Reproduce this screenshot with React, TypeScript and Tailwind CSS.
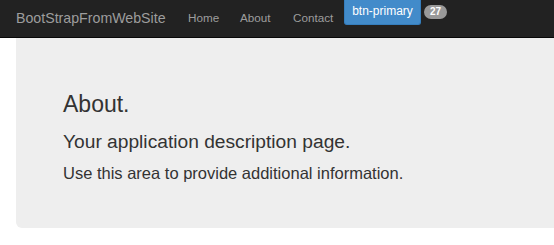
import React from "react";

export default function App() {
  return (
    <div
      className="w-[554px] h-[245px] bg-white overflow-hidden"
      style={{ fontFamily: '"Liberation Sans", Arial, sans-serif' }}
    >
      <nav className="h-[38px] bg-[#222222] border-b border-[#080808] flex items-start">
        <div className="pl-[16px] pt-[9px] text-[14.2px] leading-[18px] text-[#9d9d9d] w-[188px]">
          BootStrapFromWebSite
        </div>
        <div className="pt-[11px] text-[11.7px] leading-[14px] text-[#9d9d9d] w-[52px]">Home</div>
        <div className="pt-[11px] text-[11.7px] leading-[14px] text-[#9d9d9d] w-[53px]">About</div>
        <div className="pt-[11px] text-[11.7px] leading-[14px] text-[#9d9d9d] w-[51px]">Contact</div>
        <div className="w-[77px] h-[25px] bg-[#428bca] border border-[#357ebd] border-t-0 rounded-b-[3px] flex items-center justify-center text-white text-[12px] leading-[14px] pb-[2px]">
          btn-primary
        </div>
        <div className="ml-[3px] mt-[5px] h-[14px] w-[23px] text-center rounded-full bg-[#999999] text-white text-[10px] font-bold leading-[14px]">
          27
        </div>
      </nav>
      <div className="ml-[16px] h-[190px] bg-[#eeeeee] rounded-bl-[6px] pl-[47px] pt-[53px] text-[#333333]">
        <h1 className="text-[23px] leading-[26px]">About.</h1>
        <h3 className="mt-[14px] text-[19.2px] leading-[22px]">Your application description page.</h3>
        <p className="mt-[10px] text-[16.5px] leading-[20px]">Use this area to provide additional information.</p>
      </div>
    </div>
  );
}
